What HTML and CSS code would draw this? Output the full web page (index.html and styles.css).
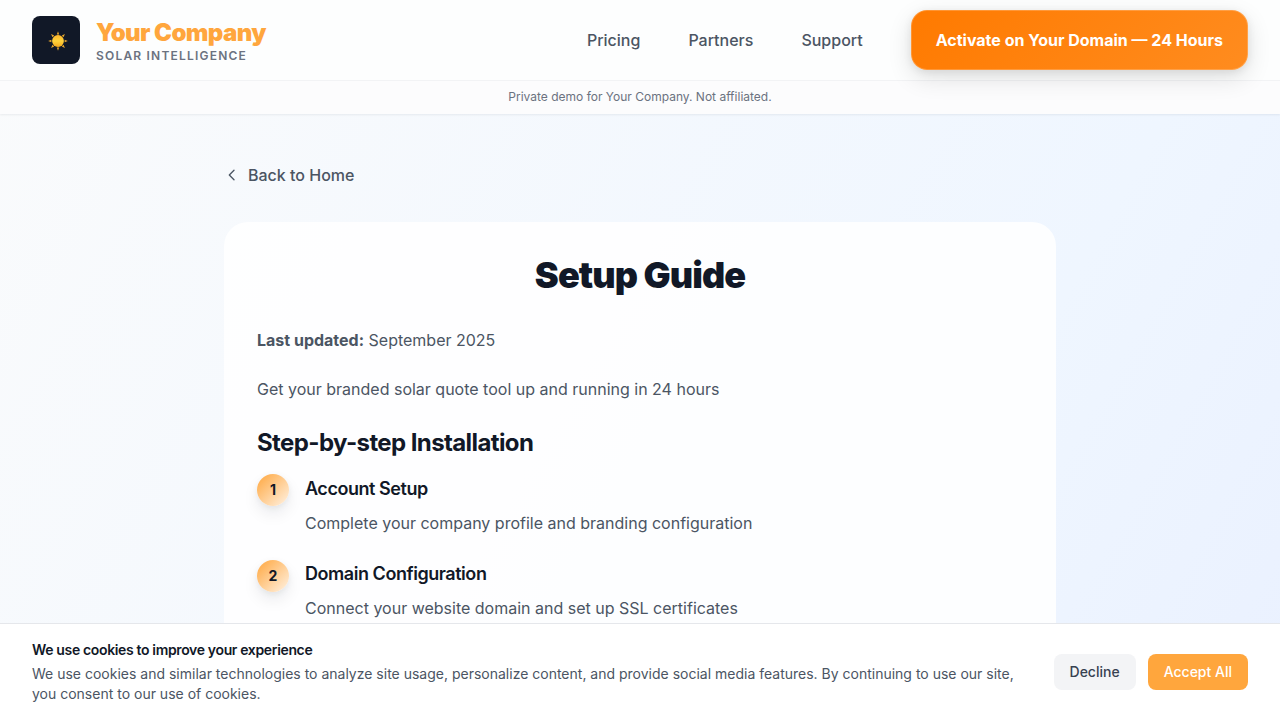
FILE: index.html
```html
<!DOCTYPE html>
<html lang="en">
<head>
<meta charset="utf-8">
<title>Setup Guide</title>
<link rel="stylesheet" href="styles.css">
</head>
<body>
<div class="page">
<header class="header">
  <div class="bar">
    <div class="brand">
      <div class="logo">
        <svg class="sun" viewBox="0 0 20 20">
          <defs><linearGradient id="sun" x1="0" y1="0" x2="0" y2="1"><stop offset="0" stop-color="#ffb52b"/><stop offset=".5" stop-color="#ffd33b"/><stop offset="1" stop-color="#f5a81c"/></linearGradient></defs>
          <g fill="#e8a62c">
            <path id="ray" d="M8.800 3.400 10 .2l1.200 3.200z"/>
            <use href="#ray" transform="rotate(45 10 10)"/><use href="#ray" transform="rotate(90 10 10)"/><use href="#ray" transform="rotate(135 10 10)"/><use href="#ray" transform="rotate(180 10 10)"/><use href="#ray" transform="rotate(225 10 10)"/><use href="#ray" transform="rotate(270 10 10)"/><use href="#ray" transform="rotate(315 10 10)"/>
          </g>
          <circle cx="10" cy="10" r="5.900" fill="url(#sun)"/>
        </svg>
      </div>
      <div class="brand-text">
        <div class="name">Your Company</div>
        <div class="tagline">SOLAR INTELLIGENCE</div>
      </div>
    </div>
    <nav class="nav">
      <a>Pricing</a><a>Partners</a><a>Support</a>
      <button class="cta">Activate on Your Domain — 24 Hours</button>
    </nav>
  </div>
  <div class="notice">Private demo for Your Company. Not affiliated.</div>
</header>
<main class="main">
  <a class="back"><svg class="chevron" viewBox="0 0 16 16" fill="none" stroke="currentColor" stroke-width="1.330" stroke-linecap="round" stroke-linejoin="round"><path d="M10 12.700 5.300 8 10 3.300"/></svg><span>Back to Home</span></a>
  <article class="card">
    <h1>Setup Guide</h1>
    <p class="updated"><strong>Last updated:</strong> September 2025</p>
    <p class="intro">Get your branded solar quote tool up and running in 24 hours</p>
    <h2>Step-by-step Installation</h2>
    <div class="steps">
      <div class="step"><div class="num">1</div><div><h3>Account Setup</h3><p>Complete your company profile and branding configuration</p></div></div>
      <div class="step"><div class="num">2</div><div><h3>Domain Configuration</h3><p>Connect your website domain and set up SSL certificates</p></div></div>
    </div>
  </article>
</main>
</div>
<aside class="cookies">
  <div class="cookie-text">
    <h4>We use cookies to improve your experience</h4>
    <p>We use cookies and similar technologies to analyze site usage, personalize content, and provide social media features. By continuing to use our site, you consent to our use of cookies.</p>
  </div>
  <div class="actions"><button class="decline">Decline</button><button class="accept">Accept All</button></div>
</aside>
</body>
</html>
```

FILE: styles.css
```css
* { box-sizing: border-box; margin: 0; padding: 0; }
body { font-family: Inter, sans-serif; font-size: 16px; line-height: 1.6; color: #4b5563; -webkit-font-smoothing: antialiased; }
button { font: inherit; border: 0; letter-spacing: inherit; white-space: nowrap; }
.page { height: 720px; overflow: hidden; background: linear-gradient(to bottom right, #fafbfc, #eff6ff 48%, #e0e7ff) 0 0 / 100% 2300px no-repeat; }
.header { position: relative; height: 114px; background: #fdfefe; box-shadow: 0 1px 2px rgba(15,23,42,.07); }
.bar { height: 80px; padding: 0 32px; display: flex; align-items: center; justify-content: space-between; }
.brand { display: flex; align-items: center; gap: 16px; }
.brand-text { padding-top: 2px; }
.logo { width: 48px; height: 48px; border-radius: 8px; background: #111827; display: flex; align-items: center; justify-content: center; padding: 2px 0 0 3px; }
.sun { width: 20px; height: 20px; }
.name { font-size: 24px; line-height: 30px; font-weight: 900; letter-spacing: -0.6px; color: #ffa63d; }
.tagline { font-size: 12px; line-height: 16px; font-weight: 600; letter-spacing: 1.2px; color: #6b7280; }
.nav { display: flex; align-items: center; gap: 48px; font-weight: 500; }
.nav a { padding-top: 2px; }
.cta { position: relative; height: 60px; padding: 1px 24px 0; border-radius: 16px; border: 1px solid rgba(255,255,255,.2); background: linear-gradient(135deg, #ff7a00, #ff8c1f) border-box; color: #fff; font-weight: 700; box-shadow: 0 8px 24px rgba(0,0,0,.12), 0 2px 8px rgba(0,0,0,.08); }
.notice { height: 34px; border-top: 1px solid #f2f3f5; background: #fcfcfd; text-align: center; font-size: 12px; line-height: 32px; color: #6b7280; }
.main { width: 832px; margin: 0 auto; padding-top: 48px; }
.back { display: flex; align-items: center; gap: 8px; height: 26px; font-weight: 500; }
.back span { padding-top: 2px; }
.chevron { width: 16px; height: 16px; }
.card { margin-top: 34px; height: 520px; padding: 32px 33px; border-radius: 24px; background: rgba(255,255,255,.85); }
h1 { text-align: center; font-size: 36px; line-height: 43px; font-weight: 900; letter-spacing: -0.9px; color: #111827; }
.updated { margin-top: 30px; line-height: 26px; }
.intro { margin-top: 23px; line-height: 26px; }
h2 { margin-top: 25px; font-size: 24px; line-height: 32px; font-weight: 700; letter-spacing: -0.6px; color: #111827; }
.steps { margin-top: 15px; display: grid; gap: 24px; }
.step { display: flex; gap: 16px; height: 61.400px; }
.num { width: 32px; height: 32px; flex: none; border-radius: 50%; display: flex; align-items: center; justify-content: center; font-size: 14px; font-weight: 700; color: #111827; background: linear-gradient(135deg, #ffa63d, #fff3e5); box-shadow: 0 8px 16px rgba(15,23,42,.08), 0 2px 6px rgba(15,23,42,.06); }
.step:nth-child(2) .num { margin-top: .3px; padding-top: 1px; }
h3 { padding-top: 1px; font-size: 18px; line-height: 28px; font-weight: 600; letter-spacing: -0.45px; color: #111827; }
.step p { margin-top: 7px; line-height: 26px; }
.cookies { position: fixed; inset: auto 0 0; height: 97px; padding: 16px 32px; display: flex; align-items: flex-start; background: #fff; border-top: 1px solid #e5e7eb; }
.cookie-text { flex: 1; padding-right: 36px; font-size: 14px; line-height: 20px; }
h4 { font-size: 14px; line-height: 20px; font-weight: 600; letter-spacing: -0.35px; color: #111827; margin-bottom: 4px; }
.actions { display: flex; gap: 12px; align-self: center; font-size: 14px; font-weight: 500; }
.decline, .accept { height: 36px; padding: 0 16px; border-radius: 8px; }
.decline { background: #f3f4f6; color: #374151; }
.accept { background: #ffa63d; color: #fff; }
```
